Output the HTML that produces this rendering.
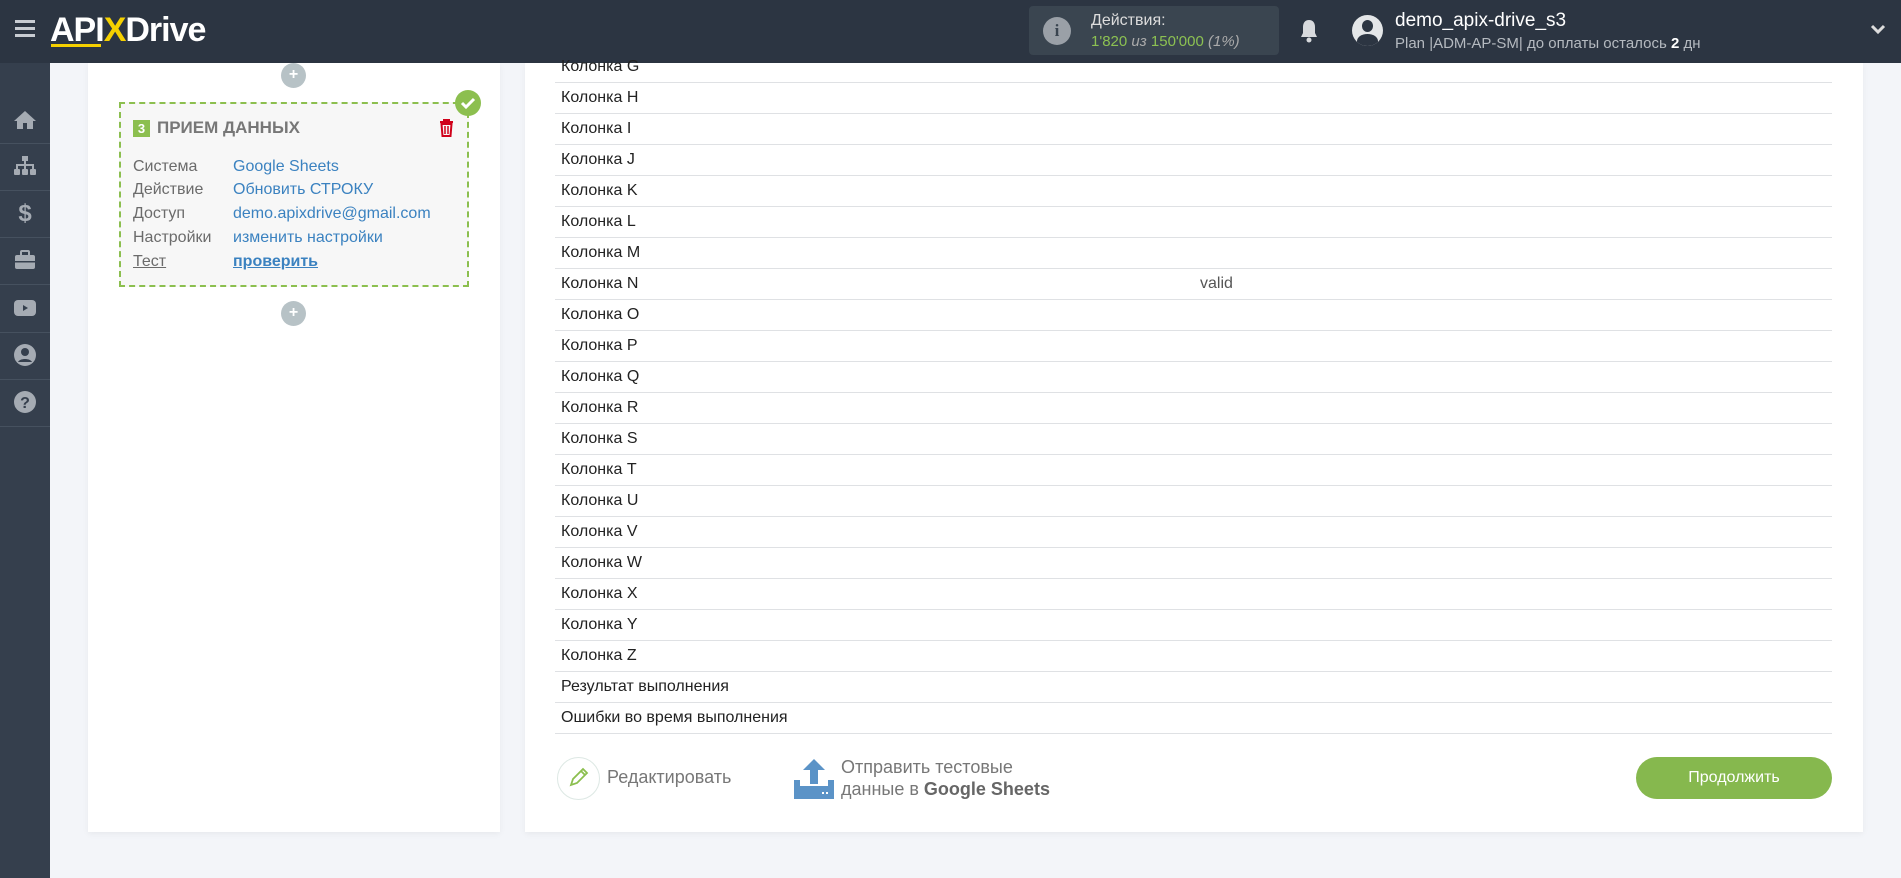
<!DOCTYPE html>
<html><head><meta charset="utf-8"><style>
*{box-sizing:border-box;margin:0;padding:0}
body{width:1901px;height:878px;overflow:hidden;background:#f3f5f9;font-family:"Liberation Sans",Arial,sans-serif;position:relative}
.hdr{position:absolute;left:0;top:0;width:1901px;height:63px;background:#2c3542}
.side{position:absolute;left:0;top:63px;width:50px;height:815px;background:#353f4d}
.sep{position:absolute;left:0;width:50px;height:1px;background:#46515f}
.ic{position:absolute;left:13px;width:24px;height:24px}
.lp{position:absolute;left:88px;top:63px;width:412px;height:769px;background:#fff;box-shadow:0 2px 6px rgba(0,0,0,.05)}
.rp{position:absolute;left:525px;top:63px;width:1338px;height:769px;background:#fff;box-shadow:0 2px 6px rgba(0,0,0,.05)}
.plus{position:absolute;width:25px;height:25px;border-radius:50%;background:#b7c2c6;color:#fff;font-size:16px;text-align:center;line-height:24px;font-weight:bold}
.box{position:absolute;left:119px;top:102px;width:350px;height:185px;border:2px dashed #8cbf4f;background:#f7f7f7}
.lab{position:absolute;left:133px;font-size:16px;color:#6b6b6b}
.val{position:absolute;left:233px;font-size:16px;color:#3b82c0}
.row{position:absolute;left:555px;width:1277px;height:31px;border-bottom:1px solid #dfe1e4;font-size:16px;color:#222;padding-left:6px;line-height:30px}
</style></head><body>
<div class="hdr">
 <div style="position:absolute;left:15px;top:20px;width:20px;height:3px;background:#c8ccd2;box-shadow:0 7px 0 #c8ccd2,0 14px 0 #c8ccd2"></div>
 <div style="position:absolute;left:50px;top:11px;font-size:34px;font-weight:bold;color:#fff;letter-spacing:-1px">API<span style="color:#f5d000">X</span>Drive</div>
 <div style="position:absolute;left:51px;top:44px;width:50px;height:3px;background:#f5d000"></div>
 <div style="position:absolute;left:1029px;top:6px;width:250px;height:49px;background:#3a4550;border-radius:4px">
  <div style="position:absolute;left:14px;top:11px;width:28px;height:28px;border-radius:50%;background:#9aa0a7;color:#3a4550;font-weight:bold;text-align:center;line-height:28px;font-size:17px;font-family:'Liberation Serif',serif">i</div>
  <div style="position:absolute;left:62px;top:6px;color:#ddd;font-size:16px">Действия:</div>
  <div style="position:absolute;left:62px;top:27px;color:#8cc152;font-size:15px">1'820 <i style="color:#aaa">из</i> 150'000 <i style="color:#aaa">(1%)</i></div>
 </div>
 <svg style="position:absolute;left:1298px;top:18px" width="22" height="26" viewBox="0 0 22 26"><path d="M11 2c-4 0-6 3-6 7v6l-2 4h16l-2-4V9c0-4-2-7-6-7z" fill="#d8dadd"/><circle cx="11" cy="22" r="2.5" fill="#d8dadd"/></svg>
 <div style="position:absolute;left:1352px;top:15px;width:31px;height:31px;border-radius:50%;background:#e4e6e8;overflow:hidden">
  <div style="position:absolute;left:10px;top:5px;width:11px;height:12px;border-radius:50%;background:#2c3542"></div>
  <div style="position:absolute;left:5px;top:19px;width:21px;height:14px;border-radius:50% 50% 0 0;background:#2c3542"></div></div>
 <div style="position:absolute;left:1395px;top:10px;color:#fff;font-size:19px">demo_apix-drive_s3</div>
 <div style="position:absolute;left:1395px;top:35px;color:#b5bac0;font-size:15px">Plan |ADM-AP-SM| до оплаты осталось <b style="color:#fff">2</b> дн</div>
 <svg style="position:absolute;left:1870px;top:24px" width="16" height="12"><path d="M2 2l6 6 6-6" stroke="#ddd" stroke-width="3" fill="none"/></svg>
</div>
<div class="side">
 <div class="sep" style="top:80px"></div><div class="sep" style="top:127px"></div><div class="sep" style="top:174px"></div><div class="sep" style="top:221px"></div><div class="sep" style="top:269px"></div><div class="sep" style="top:316px"></div><div class="sep" style="top:363px"></div>
 <svg class="ic" style="top:45px" viewBox="0 0 24 24"><path d="M12 3L1 13h3v8h6v-6h4v6h6v-8h3z" fill="#a5abb3"/></svg>
 <svg class="ic" style="top:91px" viewBox="0 0 24 24" fill="#a5abb3"><rect x="9" y="2" width="6" height="5"/><rect x="11" y="7" width="2" height="4"/><rect x="3" y="10" width="18" height="2"/><rect x="3" y="10" width="2" height="6"/><rect x="19" y="10" width="2" height="6"/><rect x="11" y="10" width="2" height="6"/><rect x="1" y="15" width="6" height="6" rx="1"/><rect x="9" y="15" width="6" height="6" rx="1"/><rect x="17" y="15" width="6" height="6" rx="1"/></svg>
 <div class="ic" style="top:137px;color:#a5abb3;font-size:24px;font-weight:bold;text-align:center">$</div>
 <svg class="ic" style="top:185px" viewBox="0 0 24 24" fill="#a5abb3"><rect x="2" y="7" width="20" height="14" rx="2"/><rect x="8" y="3" width="8" height="5" rx="1" fill="none" stroke="#a5abb3" stroke-width="2"/><rect x="2" y="13" width="20" height="1.5" fill="#353f4d"/></svg>
 <svg class="ic" style="top:233px" viewBox="0 0 24 24"><rect x="1" y="4" width="22" height="16" rx="4" fill="#a5abb3"/><path d="M10 9l5 3-5 3z" fill="#353f4d"/></svg>
 <svg class="ic" style="top:280px" viewBox="0 0 24 24"><circle cx="12" cy="12" r="11" fill="#a5abb3"/><circle cx="12" cy="9" r="4" fill="#353f4d"/><path d="M5 19c2-4 12-4 14 0" fill="#353f4d"/></svg>
 <svg class="ic" style="top:327px" viewBox="0 0 24 24"><circle cx="12" cy="12" r="11" fill="#a5abb3"/><text x="12" y="18" text-anchor="middle" font-size="16" font-weight="bold" fill="#353f4d" font-family="Liberation Sans">?</text></svg>
</div>
<div class="lp"></div>
<div class="plus" style="left:281px;top:63px">+</div>
<div class="box"></div>
<div style="position:absolute;left:455px;top:90px;width:26px;height:26px;border-radius:50%;background:#8cbf4f"><svg width="26" height="26"><path d="M7 13l4 4 8-8" stroke="#fff" stroke-width="3" fill="none"/></svg></div>
<div style="position:absolute;left:133px;top:120px;width:17px;height:17px;background:#8cbf4f;color:#fff;font-size:13px;font-weight:bold;text-align:center;line-height:17px">3</div>
<div style="position:absolute;left:157px;top:118px;font-size:17px;font-weight:bold;color:#777">ПРИЕМ ДАННЫХ</div>
<svg style="position:absolute;left:439px;top:119px" width="15" height="18" viewBox="0 0 15 18"><path d="M1 3h13M5 3V1h5v2M2.5 5h10l-1 12h-8z" stroke="#d0021b" stroke-width="2" fill="none"/><path d="M6 7v8M9 7v8" stroke="#d0021b" stroke-width="1.5"/></svg>
<div class="lab" style="top:158px">Система</div><div class="val" style="top:158px">Google Sheets</div>
<div class="lab" style="top:181px">Действие</div><div class="val" style="top:181px">Обновить СТРОКУ</div>
<div class="lab" style="top:205px">Доступ</div><div class="val" style="top:205px">demo.apixdrive@gmail.com</div>
<div class="lab" style="top:229px">Настройки</div><div class="val" style="top:229px">изменить настройки</div>
<div class="lab" style="top:253px;text-decoration:underline">Тест</div><div class="val" style="top:253px;font-weight:bold;text-decoration:underline">проверить</div>
<div class="plus" style="left:281px;top:301px">+</div>
<div class="rp"></div>
<div class="row" style="top:52px">Колонка G</div>
<div class="row" style="top:83px">Колонка H</div>
<div class="row" style="top:114px">Колонка I</div>
<div class="row" style="top:145px">Колонка J</div>
<div class="row" style="top:176px">Колонка K</div>
<div class="row" style="top:207px">Колонка L</div>
<div class="row" style="top:238px">Колонка M</div>
<div class="row" style="top:269px">Колонка N<span style="position:absolute;left:645px;color:#555">valid</span></div>
<div class="row" style="top:300px">Колонка O</div>
<div class="row" style="top:331px">Колонка P</div>
<div class="row" style="top:362px">Колонка Q</div>
<div class="row" style="top:393px">Колонка R</div>
<div class="row" style="top:424px">Колонка S</div>
<div class="row" style="top:455px">Колонка T</div>
<div class="row" style="top:486px">Колонка U</div>
<div class="row" style="top:517px">Колонка V</div>
<div class="row" style="top:548px">Колонка W</div>
<div class="row" style="top:579px">Колонка X</div>
<div class="row" style="top:610px">Колонка Y</div>
<div class="row" style="top:641px">Колонка Z</div>
<div class="row" style="top:672px">Результат выполнения</div>
<div class="row" style="top:703px">Ошибки во время выполнения</div>
<div style="position:absolute;left:557px;top:757px;width:43px;height:43px;border-radius:50%;border:1.5px solid #dde8e4"><svg width="40" height="40" viewBox="0 0 40 40"><path d="M13 27l2-6 10-10 4 4-10 10z M23 13l4 4" stroke="#8cbf4f" stroke-width="1.8" fill="none"/></svg></div>
<div style="position:absolute;left:607px;top:767px;font-size:18px;color:#777">Редактировать</div>
<svg style="position:absolute;left:794px;top:759px" width="40" height="40" viewBox="0 0 40 40"><path d="M20 0l11 11h-7v14h-8V11H9z" fill="#5b93c7"/><path d="M0 21h6v6h28v-6h6v19H0z" fill="#5b93c7"/><rect x="28" y="33" width="2" height="2" fill="#fff"/><rect x="32" y="33" width="2" height="2" fill="#fff"/></svg>
<div style="position:absolute;left:841px;top:756px;font-size:18px;color:#777;line-height:22px">Отправить тестовые<br>данные в <b style="color:#666">Google Sheets</b></div>
<div style="position:absolute;left:1636px;top:757px;width:196px;height:42px;border-radius:21px;background:#86b84e;color:#fff;font-size:16px;text-align:center;line-height:42px">Продолжить</div>
</body></html>
